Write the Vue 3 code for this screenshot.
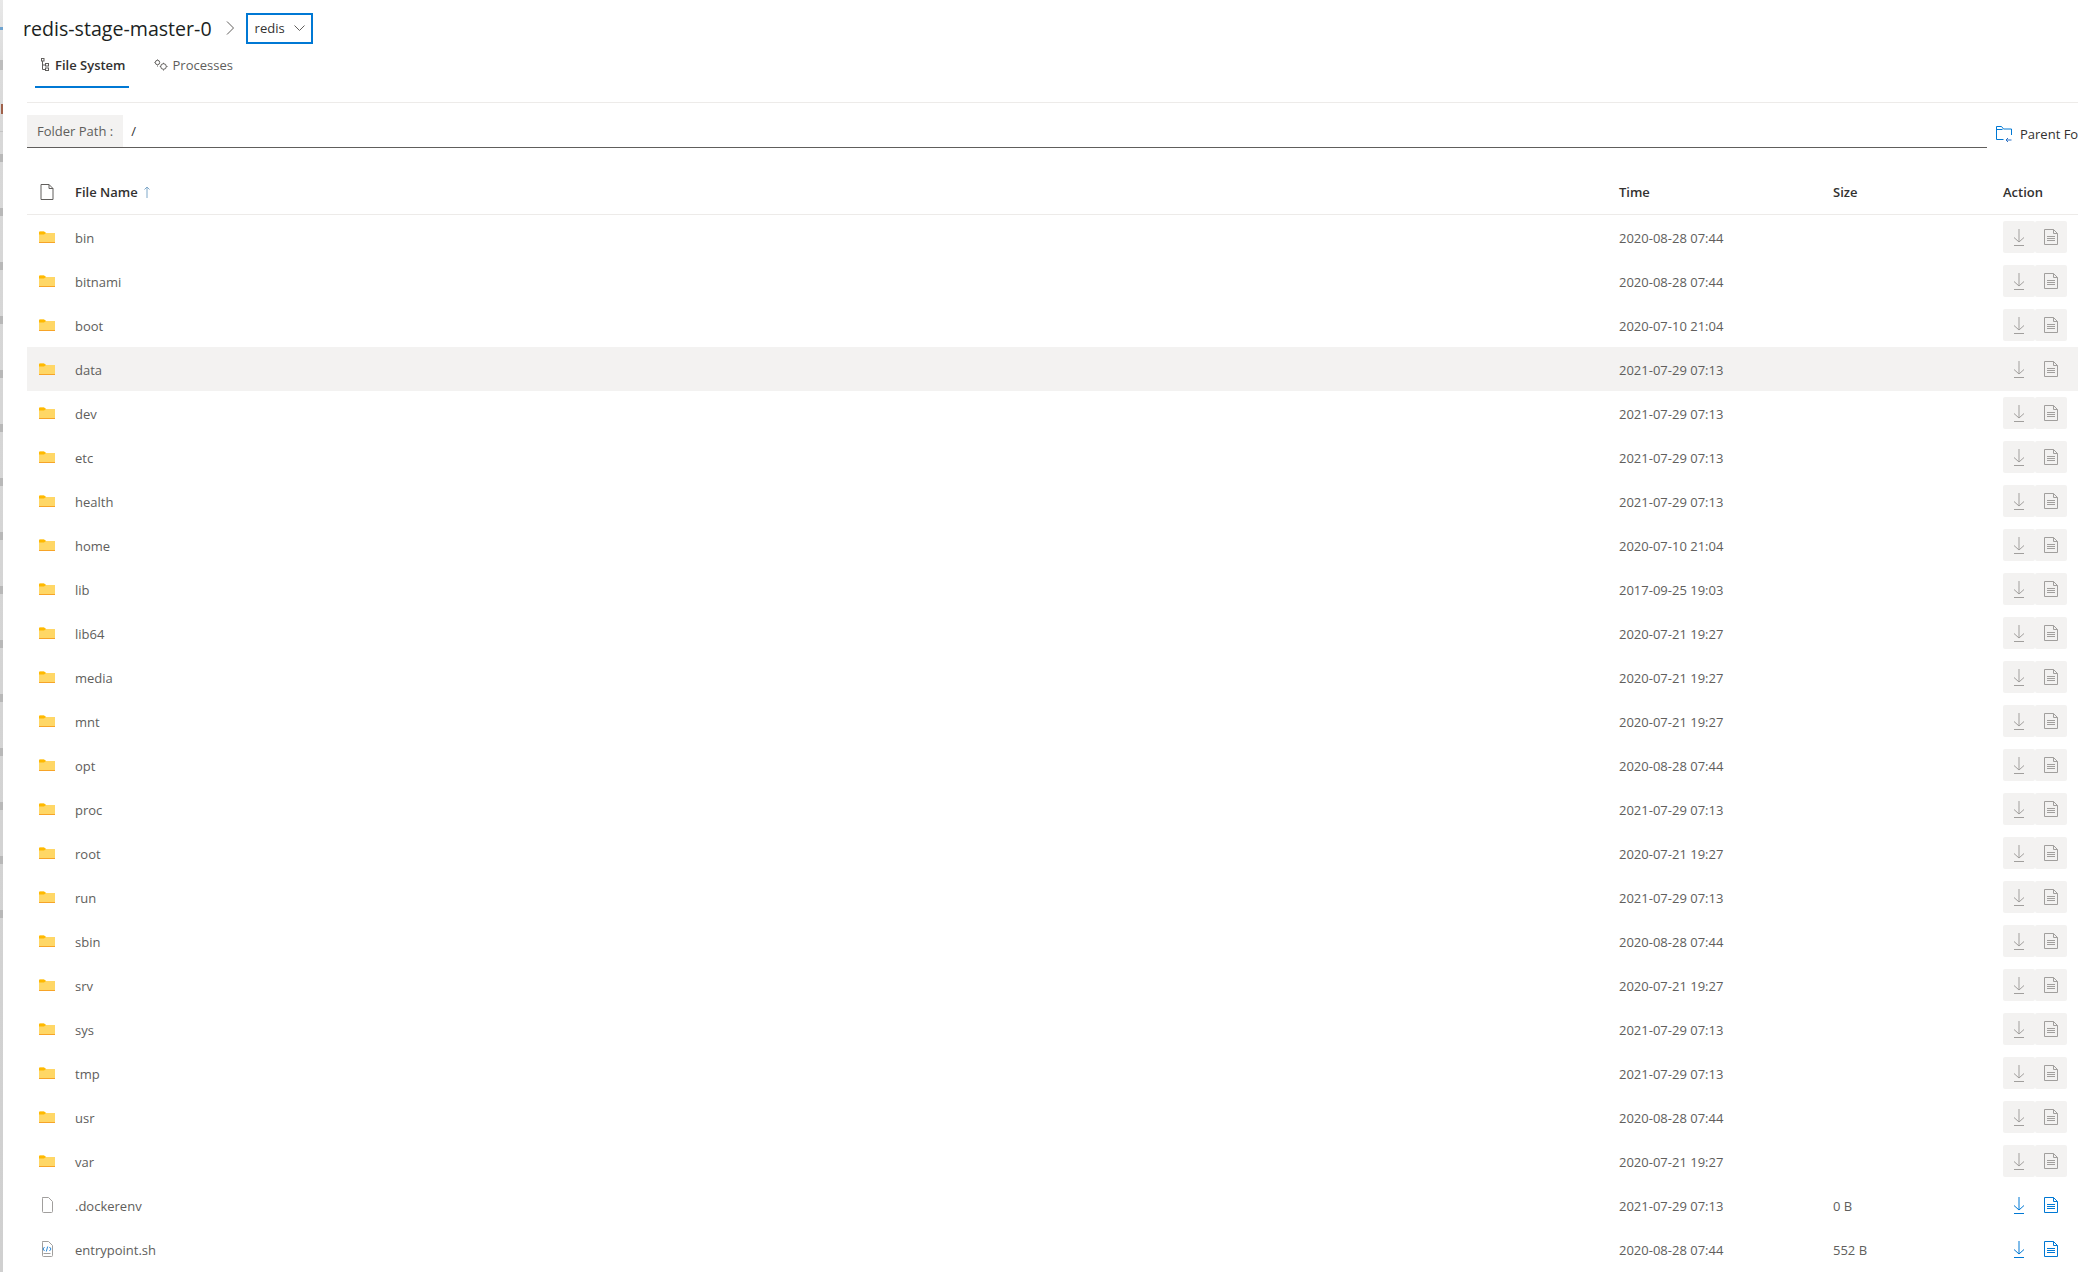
<script setup>
const rows = [
  ['bin', '2020-08-28 07:44'], ['bitnami', '2020-08-28 07:44'], ['boot', '2020-07-10 21:04'],
  ['data', '2021-07-29 07:13'], ['dev', '2021-07-29 07:13'], ['etc', '2021-07-29 07:13'],
  ['health', '2021-07-29 07:13'], ['home', '2020-07-10 21:04'], ['lib', '2017-09-25 19:03'],
  ['lib64', '2020-07-21 19:27'], ['media', '2020-07-21 19:27'], ['mnt', '2020-07-21 19:27'],
  ['opt', '2020-08-28 07:44'], ['proc', '2021-07-29 07:13'], ['root', '2020-07-21 19:27'],
  ['run', '2021-07-29 07:13'], ['sbin', '2020-08-28 07:44'], ['srv', '2020-07-21 19:27'],
  ['sys', '2021-07-29 07:13'], ['tmp', '2021-07-29 07:13'], ['usr', '2020-08-28 07:44'],
  ['var', '2020-07-21 19:27'],
].map(([name, time]) => ({ name, time, kind: 'folder', size: '' }))
rows.push({ name: '.dockerenv', time: '2021-07-29 07:13', kind: 'file', size: '0 B' })
rows.push({ name: 'entrypoint.sh', time: '2020-08-28 07:44', kind: 'script', size: '552 B' })
const marks = Array.from({ length: 15 }, (_, i) => i)
</script>

<template>
  <div class="page">
    <aside class="edge">
      <i class="spot blue"></i>
      <i class="spot band"></i>
      <i class="spot brown"></i>
      <i class="spot rule"></i>
      <span v-for="m in marks" :key="m" class="mark"></span>
    </aside>
    <main class="main">
      <header class="title">
        <h1>redis-stage-master-0</h1>
        <svg class="crumb" width="8" height="14" viewBox="0 0 8 14"><path d="M1 .5l6.500 6.500-6.500 6.500" fill="none" stroke="#605e5c" stroke-width="1"/></svg>
        <div class="select"><span>redis</span>
          <svg width="11" height="6" viewBox="0 0 11 6"><path d="M.5.500l5 5 5-5" fill="none" stroke="#605e5c"/></svg>
        </div>
      </header>
      <nav class="tabs">
        <div class="tab active">
          <svg width="10" height="14" viewBox="0 0 10 14" fill="none" stroke="#605e5c"><rect x="1.500" y="0.500" width="2.500" height="2.500"/><path d="M2.500 3v8.500H5M2.500 7H5"/><rect x="5.500" y="5.500" width="3" height="2.500"/><rect x="5.500" y="10" width="3" height="2.500"/></svg>
          File System
        </div>
        <div class="tab">
          <svg width="14" height="12" viewBox="0 0 14 12" fill="none" stroke="#605e5c"><circle cx="3.500" cy="3.500" r="2.200"/><circle cx="9.500" cy="7.500" r="2.800"/><path d="M3.500.5v-1M3.500 6.500v1M.5 3.500h-1M9.500 3.800v1M9.500 10.500v1M5.800 7.500h1M12.500 7.500h1"/></svg>
          Processes
        </div>
      </nav>
      <div class="pathbar">
        <div class="field"><span class="prefix">Folder Path :</span><span class="value">/</span></div>
        <div class="parent">
          <svg width="16" height="16" viewBox="0 0 16 16" fill="none" stroke="#0078d4"><path d="M.5 13.500V.5h5l2 2.500h8v6M.5 13.500h7M.5 3.500h6"/><path d="M15.500 14H10M12 12l-2 2 2 2" stroke="#2b6fc4"/></svg>
          <span>Parent Folder</span>
        </div>
      </div>
      <div class="table">
        <div class="row head">
          <div class="c-icon">
            <svg width="14" height="16" viewBox="0 0 14 16" fill="none" stroke="#605e5c"><path d="M1 .5h8l4 4v11H1zM9 .5v4h4"/></svg>
          </div>
          <div class="c-name">File Name <svg class="sort" width="8" height="12" viewBox="0 0 8 12" fill="none" stroke="#7fa8c9"><path d="M4 12V1M1.500 3.500L4 1l2.500 2.500"/></svg></div>
          <div class="c-time">Time</div>
          <div class="c-size">Size</div>
          <div class="c-action">Action</div>
        </div>
        <div v-for="r in rows" :key="r.name" class="row" :class="{ selected: r.name === 'data' }">
          <div class="c-icon">
            <svg v-if="r.kind === 'folder'" width="16" height="12" viewBox="0 0 16 12"><path d="M0 1.500A1 1 0 0 1 1 .5h4l2 1.500h9v10H0z" fill="#ffd766"/><path d="M0 1.500A1 1 0 0 1 1 .5h4l2 1.500-2 1.500H0z" fill="#ffb900"/><rect y="11" width="16" height="1" fill="#f7a428"/></svg>
            <svg v-else-if="r.kind === 'file'" width="12" height="16" viewBox="0 0 12 16" fill="none" stroke="#a19f9d"><path d="M1.500.5h6l4 4v10a1 1 0 0 1-1 1h-8a1 1 0 0 1-1-1V1.500a1 1 0 0 1 1-1z"/></svg>
            <svg v-else width="12" height="16" viewBox="0 0 12 16" fill="none"><path d="M1.500.5h6l4 4v10a1 1 0 0 1-1 1h-8a1 1 0 0 1-1-1V1.500a1 1 0 0 1 1-1z" stroke="#a19f9d"/><path d="M3.500 6L2 8l1.500 2M8.500 6L10 8l-1.500 2M6.700 5.500L5.300 10.500" stroke="#2b88d8"/><path d="M2.500 12.500h7" stroke="#a19f9d"/></svg>
          </div>
          <div class="c-name">{{ r.name }}</div>
          <div class="c-time">{{ r.time }}</div>
          <div class="c-size">{{ r.size }}</div>
          <div class="c-action">
            <div class="btn" :class="{ off: r.kind === 'folder' }">
              <svg width="12" height="17" viewBox="0 0 12 17" fill="none" stroke="currentColor"><path d="M6 0v13M1 8.500L6 13l5-4.500M1 16.500h10"/></svg>
            </div>
            <div class="btn" :class="{ off: r.kind === 'folder' }">
              <svg width="14" height="16" viewBox="0 0 14 16" fill="none" stroke="currentColor"><path d="M.5.500h9l4 4v11H.5zM9.500.500v4h4M3 7.500h8M3 9.500h8M3 11.500h8"/></svg>
            </div>
          </div>
        </div>
      </div>
    </main>
  </div>
</template>

<style>
html, body { margin: 0; background: #fff; overflow: hidden; }
</style>

<style scoped>
.page { display: flex; width: 2078px; height: 1272px; overflow: hidden; font-family: "Segoe UI", "Open Sans", "Noto Sans", sans-serif; color: #323130; font-size: 13px; }
.edge { position: relative; display: flex; flex-direction: column; width: 3px; height: 1272px; padding-top: 154px; box-sizing: border-box; flex: none; background: linear-gradient(#e8e8e8, #dcdcdc 60px, #d8d8d8 130px, #d0d0d0); }
.mark { display: block; width: 3px; height: 8px; margin-bottom: 46px; background: #b8b8b8; flex: none; }
.spot { position: absolute; left: 0; width: 3px; }
.blue { top: 27px; height: 3px; background: #6fa3cf; }
.band { top: 60px; height: 10px; background: #bdbdbd; }
.brown { top: 104px; left: 1px; width: 2px; height: 10px; background: #a0614a; }
.rule { top: 131px; height: 1px; background: #c4c4c4; }
.main { flex: none; width: 2075px; padding-left: 20px; box-sizing: border-box; }
.title { display: flex; align-items: center; height: 56px; }
h1 { margin: 0; font-size: 19.600px; font-weight: 500; color: #201f1e; white-space: nowrap; }
.crumb { margin: 0 12px 0 14px; flex: none; }
.select { display: flex; align-items: center; justify-content: space-between; box-sizing: border-box; width: 67px; height: 31px; padding: 0 6px 0 7px; border: 2px solid #0078d4; font-size: 13px; }
.tabs { display: flex; height: 40px; margin: -8px 0 14px 12px; }
.tab { display: flex; align-items: center; gap: 5px; box-sizing: border-box; height: 40px; padding: 0 3px 6px 5px; margin-right: 20px; color: #605e5c; }
.tab.active { font-weight: 600; color: #323130; box-shadow: inset 0 -2px 0 #0078d4; }
.pathbar { display: flex; align-items: flex-start; border-top: 1px solid #edebe9; padding-top: 12px; height: 67px; box-sizing: border-box; margin-left: 4px; }
.field { display: flex; width: 1960px; flex: none; height: 33px; border-bottom: 1px solid #605e5c; box-sizing: border-box; }
.prefix { display: flex; align-items: center; padding: 0 10px; background: #f3f2f1; color: #605e5c; }
.value { display: flex; align-items: center; padding: 0 8px; }
.parent { display: flex; align-items: center; gap: 8px; margin-left: 9px; height: 38px; white-space: nowrap; color: #323130; }
.table { margin-left: 4px; width: 2051px; }
.row { display: flex; align-items: center; height: 44px; color: #605e5c; }
.row.head { color: #323130; font-weight: 600; border-bottom: 1px solid #edebe9; box-sizing: border-box; height: 46px; }
.row.selected { background: #f3f2f1; }
.row:not(.head) .c-name, .row:not(.head) .c-time, .row:not(.head) .c-size { padding-top: 2px; box-sizing: border-box; }
.c-icon { width: 48px; flex: none; display: flex; justify-content: center; padding: 0 20px 0 12px; box-sizing: border-box; }
.c-name { width: 1544px; flex: none; }
.sort { margin-left: 2px; vertical-align: -1px; }
.c-time { width: 214px; flex: none; }
.c-size { width: 170px; flex: none; }
.c-action { display: flex; }
.btn { width: 32px; height: 32px; display: flex; align-items: center; justify-content: center; color: #0078d4; border-radius: 2px; }
.btn.off { background: #f3f2f1; color: #a19f9d; }
.row.selected .btn.off { background: transparent; }
</style>
